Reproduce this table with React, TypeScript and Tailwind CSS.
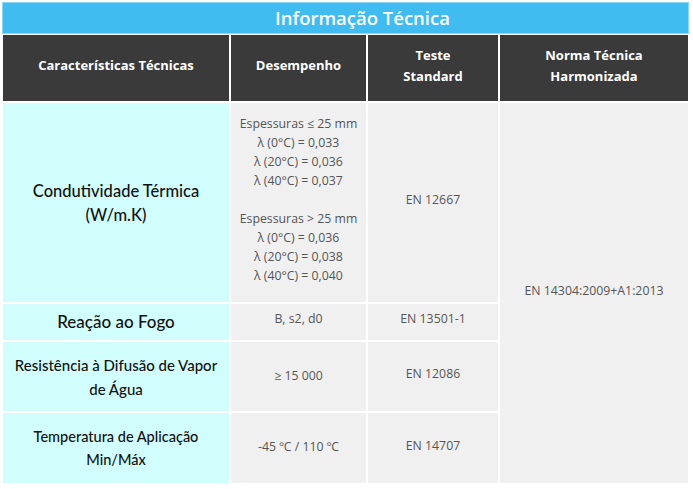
const head = 'bg-[#3b3a3a] text-white font-bold text-[13px] leading-[21px] pb-[5px] flex items-center justify-center text-center font-["Open_Sans",sans-serif]';
const label = 'bg-[#d2fdfd] text-[#111] font-medium flex items-center justify-center text-center font-["Lato",sans-serif]';
const cell = 'bg-[#f0f0f0] text-[#555] text-[12.3px] leading-[19px] flex items-center justify-center text-center font-["Open_Sans",sans-serif]';

const lambdaRows: [string, string[]][] = [
  ['Espessuras ≤ 25 mm', ['λ (0°C) = 0,033', 'λ (20°C) = 0,036', 'λ (40°C) = 0,037']],
  ['Espessuras > 25 mm', ['λ (0°C) = 0,036', 'λ (20°C) = 0,038', 'λ (40°C) = 0,040']],
];

export default function App() {
  return (
    <div className="w-[693px] h-[489px] bg-white pl-[3px] pt-[3px]">
      <div className="grid grid-cols-[226px_135px_130px_188px] grid-rows-[30px_66px_199px_36px_69px_70px] gap-[2px]">
        <div className="col-span-4 bg-[#40bcf0] text-white text-[18.5px] font-semibold pl-[34px] flex items-center justify-center font-['Open_Sans',sans-serif] outline outline-1 outline-[#8fd6f5]">
          Informação Técnica
        </div>

        <div className={head}>Características Técnicas</div>
        <div className={head}>Desempenho</div>
        <div className={head}>
          Teste
          <br />
          Standard
        </div>
        <div className={head}>
          Norma Técnica
          <br />
          Harmonizada
        </div>

        <div className={`${label} text-[16.5px] leading-[24px]`}>
          Condutividade Térmica
          <br />
          (W/m.K)
        </div>
        <div className={`${cell} flex-col pb-[6px]`}>
          {lambdaRows.map(([title, vals], i) => (
            <div key={title} className={i > 0 ? 'mt-[19px]' : ''}>
              <div>{title}</div>
              {vals.map((v) => (
                <div key={v}>{v}</div>
              ))}
            </div>
          ))}
        </div>
        <div className={`${cell} pb-[6px]`}>EN 12667</div>
        <div className={`${cell} row-span-4 pb-[6px]`}>EN 14304:2009+A1:2013</div>

        <div className={`${label} text-[17px]`}>Reação ao Fogo</div>
        <div className={`${cell} pb-[8px]`}>B, s2, d0</div>
        <div className={`${cell} pb-[8px]`}>EN 13501-1</div>

        <div className={`${label} text-[15px] leading-[24px]`}>
          Resistência à Difusão de Vapor
          <br />
          de Água
        </div>
        <div className={`${cell} pb-[2px]`}>≥ 15 000</div>
        <div className={`${cell} pb-[6px]`}>EN 12086</div>

        <div className={`${label} text-[14.5px] leading-[23px]`}>
          Temperatura de Aplicação
          <br />
          Min/Máx
        </div>
        <div className={`${cell} pb-[4px]`}>-45 ºC / 110 ºC</div>
        <div className={`${cell} pb-[6px]`}>EN 14707</div>
      </div>
    </div>
  );
}
